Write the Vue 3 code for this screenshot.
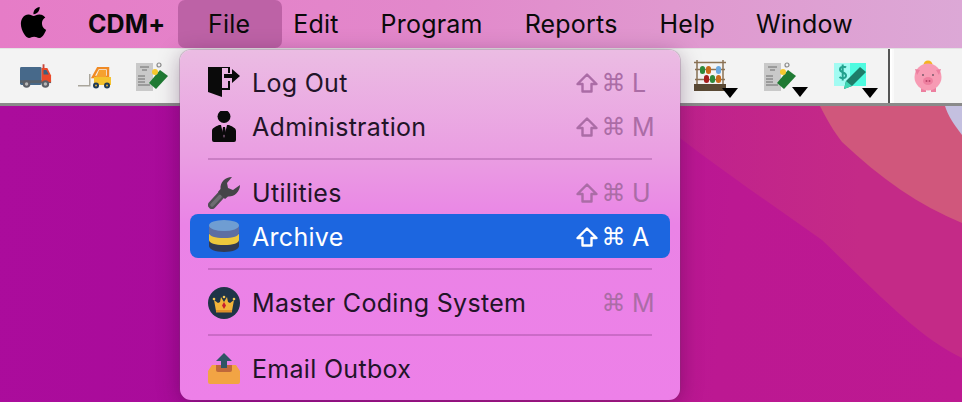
<script setup>
</script>

<template>
  <div class="screen">
    <header class="menubar">
      <svg class="apple" viewBox="0 0 24 24" width="31" height="31"><path fill="#000" d="M12.152 6.896c-.948 0-2.415-1.078-3.96-1.04-2.04.027-3.91 1.183-4.961 3.014-2.117 3.675-.546 9.103 1.519 12.09 1.013 1.454 2.208 3.09 3.792 3.039 1.52-.065 2.09-.987 3.935-.987 1.831 0 2.35.987 3.96.948 1.637-.026 2.676-1.48 3.676-2.948 1.156-1.688 1.636-3.325 1.662-3.415-.039-.013-3.182-1.221-3.22-4.857-.026-3.04 2.48-4.494 2.597-4.559-1.429-2.09-3.623-2.324-4.39-2.376-2-.156-3.675 1.09-4.61 1.09zM15.53 3.83c.843-1.012 1.4-2.427 1.245-3.83-1.207.052-2.662.805-3.532 1.818-.78.896-1.454 2.338-1.273 3.714 1.338.104 2.715-.688 3.559-1.701"/></svg>
      <span class="brand">CDM+</span>
      <span class="mi file">File</span>
      <span class="mi edit">Edit</span>
      <span class="mi program">Program</span>
      <span class="mi reports">Reports</span>
      <span class="mi help">Help</span>
      <span class="mi window">Window</span>
    </header>

    <div class="toolbar">
      <svg class="t truck" width="32" height="25" viewBox="0 0 34 26">
        <rect x="0" y="3" width="23" height="19" rx="1.5" fill="#47698a"/>
        <rect x="0" y="17" width="33" height="3" fill="#56616b"/>
        <path d="M23 4h6l4 8v7H23z" fill="#ea4a2a"/>
        <path d="M25 6h3l2.600 5H25z" fill="#3d5f7c"/>
        <rect x="24" y="0" width="2" height="4" fill="#c9463a"/>
        <circle cx="7" cy="21" r="4" fill="#5c5f66"/><circle cx="7" cy="21" r="1.800" fill="#b8b8b8"/>
        <circle cx="27" cy="21" r="4" fill="#5c5f66"/><circle cx="27" cy="21" r="1.800" fill="#b8b8b8"/>
      </svg>
      <svg class="t fork" width="34" height="22" viewBox="0 0 34 22">
        <path d="M0 18h11v-11h1.500v12.500H0z" fill="#a9a59b"/>
        <path d="M15 10l5-9h10v9z" fill="none" stroke="#f08a24" stroke-width="2.500"/>
        <path d="M16 10h17v8H16z" fill="#f4c22f"/>
        <path d="M21 3h7v7h-10z" fill="#f6a12f"/>
        <circle cx="18" cy="18.500" r="3" fill="#1f3a56"/><circle cx="18" cy="18.500" r="1" fill="#e4b43a"/>
        <circle cx="29" cy="18.500" r="3" fill="#1f3a56"/><circle cx="29" cy="18.500" r="1" fill="#e4b43a"/>
      </svg>
      <svg class="t inv1" width="34" height="30" viewBox="0 0 34 30">
        <rect x="1" y="2" width="17" height="28" fill="#c9c9c9"/>
        <path d="M5 6h9M7 9h5M3 15h7M3 18h7M3 21h7M3 24h12" stroke="#6d6d6d" stroke-width="1"/>
        <path d="M14 22l11-13 8 6-12 13z" fill="#1f7a33"/>
        <circle cx="20" cy="11" r="3" fill="#f5c82e"/>
        <circle cx="24" cy="4" r="2" fill="none" stroke="#8a8a8a" stroke-width="1.200"/>
      </svg>

      <span class="tool abacus">
        <svg width="32" height="32" viewBox="0 0 32 32">
          <path d="M0 2.500h32M1 9.500h30M1 19.500h30" stroke="#8b7355" stroke-width="1.500"/>
          <path d="M3 0v26M29 0v26" stroke="#8b7355" stroke-width="1.500"/>
          <rect x="0" y="24" width="32" height="7" fill="#5a4a35"/>
          <rect x="6" y="6" width="5" height="8" rx="2.500" fill="#2f8a3a"/>
          <rect x="12" y="6" width="5" height="8" rx="2.500" fill="#c96a1a"/>
          <rect x="22" y="6" width="5" height="8" rx="2.500" fill="#6aa8e0"/>
          <rect x="10" y="15" width="5" height="8" rx="2.500" fill="#a71d1d"/>
          <rect x="16" y="15" width="5" height="8" rx="2.500" fill="#2f8a3a"/>
          <rect x="22" y="15" width="5" height="8" rx="2.500" fill="#c96a1a"/>
        </svg>
        <i class="caret"></i>
      </span>
      <span class="tool inv2">
        <svg width="34" height="30" viewBox="0 0 34 30">
          <rect x="1" y="2" width="17" height="28" fill="#c9c9c9"/>
          <path d="M5 6h9M7 9h5M3 15h7M3 18h7M3 21h7M3 24h12" stroke="#6d6d6d" stroke-width="1"/>
          <path d="M14 22l11-13 8 6-12 13z" fill="#1f7a33"/>
          <circle cx="20" cy="11" r="3" fill="#f5c82e"/>
          <circle cx="24" cy="4" r="2" fill="none" stroke="#8a8a8a" stroke-width="1.200"/>
        </svg>
        <i class="caret"></i>
      </span>
      <span class="tool dollar">
        <svg width="33" height="26" viewBox="0 0 33 26">
          <rect x="0" y="0" width="16" height="23" fill="#a2fbf2"/>
          <rect x="16" y="0" width="16" height="23" fill="#4ffbe0"/>
          <path d="M12 4.500c-1-1-6-1.500-6 2 0 3.500 6 2.500 6 6 0 3.500-5 3-6.500 1.500M8.700 1.500v16" fill="none" stroke="#22a28e" stroke-width="2"/>
          <path d="M10 26l2-8L26 4l6 5-14 14z" fill="#1d7d69"/>
          <path d="M10 26l2-8 6 5z" fill="#3fd8b4"/>
        </svg>
        <i class="caret"></i>
      </span>
      <span class="divider"></span>
      <svg class="t piggy" width="30" height="34" viewBox="0 0 30 34">
        <circle cx="15" cy="6" r="4.500" fill="#f5b21f"/>
        <rect x="8" y="28" width="5" height="5" fill="#ec7f9f"/><rect x="18" y="28" width="5" height="5" fill="#ec7f9f"/>
        <circle cx="15" cy="18" r="13.500" fill="#f79bb4"/>
        <path d="M2 10l5 1-3 5zM28 10l-5 1 3 5z" fill="#ec7f9f"/>
        <ellipse cx="15" cy="22" rx="5" ry="4" fill="#ee7f9f"/>
        <circle cx="13.500" cy="22" r="1" fill="#b9466b"/><circle cx="16.500" cy="22" r="1" fill="#b9466b"/>
        <circle cx="10" cy="16" r="1" fill="#7a5a6a"/><circle cx="20" cy="16" r="1" fill="#7a5a6a"/>
      </svg>
    </div>

    <main class="desktop">
      <svg class="wall" width="962" height="296" viewBox="0 0 962 296">
        <defs>
          <linearGradient id="fadeLeft" x1="660" y1="0" x2="860" y2="0" gradientUnits="userSpaceOnUse">
            <stop offset="0" stop-color="#c42a87" stop-opacity="0.45"/>
            <stop offset="1" stop-color="#c42a87"/>
          </linearGradient>
        </defs>
        <path d="M640 0H962V252C920 232 880 190 822 134 760 90 700 50 640 0Z" fill="url(#fadeLeft)"/>
        <path d="M820 0H962V117C920 100 880 72 842 36 834 26 826 12 820 0Z" fill="#d0577c"/>
        <path d="M945 0H962V29C955 20 948 10 945 0Z" fill="#c4c0e0"/>
      </svg>
    </main>

    <nav class="menu">
      <div class="row">
        <svg class="ic" width="32" height="32" viewBox="0 1 32 32">
          <path d="M0 0H14V31L0 26Z" fill="#0a0a0a"/>
          <path d="M14 0H22V7H20V2H14ZM14 24H22V15H20V22H14Z" fill="#0a0a0a"/>
          <path d="M16 8H24V3L32 10 24 17V12H16Z" fill="#0a0a0a"/>
        </svg>
        <span class="lb">Log Out</span>
        <span class="sc">
          <svg class="shift" width="22" height="20" viewBox="0 0 22 20"><path d="M11 1.500L20.500 11H15.500V18.500H6.500V11H1.500Z" fill="none" stroke="currentColor" stroke-width="2.400" stroke-linejoin="round"/></svg>
          <b class="sym cmd">⌘</b><b class="key">L</b>
        </span>
      </div>
      <div class="row">
        <svg class="ic" width="32" height="32" viewBox="0 1 32 32">
          <circle cx="16" cy="6.500" r="6.500" fill="#0a0a0a"/>
          <path d="M6 32a2 2 0 0 1-2-2V21c0-3 3-4 7-6h10c4 2 7 3 7 6v9a2 2 0 0 1-2 2Z" fill="#0a0a0a"/>
          <path d="M13 15h6l-3 13z" fill="#f0a4e4"/><path d="M15 17h2l1 6-2 3-2-3z" fill="#0a0a0a"/>
        </svg>
        <span class="lb">Administration</span>
        <span class="sc">
          <svg class="shift" width="22" height="20" viewBox="0 0 22 20"><path d="M11 1.500L20.500 11H15.500V18.500H6.500V11H1.500Z" fill="none" stroke="currentColor" stroke-width="2.400" stroke-linejoin="round"/></svg>
          <b class="sym cmd">⌘</b><b class="key">M</b>
        </span>
      </div>
      <div class="sep"></div>
      <div class="row short">
        <svg class="ic" width="32" height="32" viewBox="0 0 32 32">
          <path d="M4 28L15 16" stroke="#504f54" stroke-width="8" stroke-linecap="round"/>
          <path d="M4 28L12 19.500" stroke="#6e6d72" stroke-width="3.500" stroke-linecap="round"/>
          <path d="M24 0C17 0 12 5 12.500 12L10 15l7 7 3-2.500C26 20 32 15 32 8l-7 5-5-2-1-5z" fill="#454448"/>
        </svg>
        <span class="lb">Utilities</span>
        <span class="sc">
          <svg class="shift" width="22" height="20" viewBox="0 0 22 20"><path d="M11 1.500L20.500 11H15.500V18.500H6.500V11H1.500Z" fill="none" stroke="currentColor" stroke-width="2.400" stroke-linejoin="round"/></svg>
          <b class="sym cmd">⌘</b><b class="key">U</b>
        </span>
      </div>
      <div class="row active">
        <svg class="ic" width="32" height="32" viewBox="0 0 32 32">
          <path d="M1 5V26C1 29 7 32 16 32S31 29 31 26V5Z" fill="#323a52"/>
          <path d="M1 14V20C1 23 7 25 16 25S31 23 31 20V14Z" fill="#edc73c"/>
          <path d="M1 5V13C1 16 7 18 16 18S31 16 31 13V5Z" fill="#5d6ea3"/>
          <ellipse cx="16" cy="5.500" rx="15" ry="5.500" fill="#6f9dd2"/>
        </svg>
        <span class="lb">Archive</span>
        <span class="sc">
          <svg class="shift" width="22" height="20" viewBox="0 0 22 20"><path d="M11 1.500L20.500 11H15.500V18.500H6.500V11H1.500Z" fill="none" stroke="currentColor" stroke-width="2.400" stroke-linejoin="round"/></svg>
          <b class="sym cmd">⌘</b><b class="key">A</b>
        </span>
      </div>
      <div class="sep after-active"></div>
      <div class="row">
        <svg class="ic" width="32" height="32" viewBox="0 0 32 32">
          <circle cx="16" cy="16" r="16" fill="#1f3447"/>
          <path d="M6 13l4 3 2-1 1-5 3 5 3-5 1 5 2 1 4-3-2 11H8z" fill="#f2b43a"/>
          <rect x="8" y="23" width="16" height="2.500" fill="#dd8f2a"/>
          <path d="M16 15l2 3.500-2 3.500-2-3.500z" fill="#c81e2e"/>
          <circle cx="6" cy="12" r="1.300" fill="#f5c95a"/><circle cx="26" cy="12" r="1.300" fill="#f5c95a"/><circle cx="16" cy="10" r="1.300" fill="#f5c95a"/>
        </svg>
        <span class="lb">Master Coding System</span>
        <span class="sc"><b class="sym cmd">⌘</b><b class="key">M</b></span>
      </div>
      <div class="sep"></div>
      <div class="row">
        <svg class="ic" width="32" height="32" viewBox="0 0 32 32">
          <path d="M4 12H28L32 18V29a2 2 0 0 1-2 2H2a2 2 0 0 1-2-2V18z" fill="#f2a444"/>
          <path d="M8 12h16v5a2 2 0 0 1-2 2H10a2 2 0 0 1-2-2z" fill="#c0683a"/>
          <path d="M16 0L24 8H19V15H13V8H8z" fill="#2f5565"/>
        </svg>
        <span class="lb">Email Outbox</span>
      </div>
    </nav>
  </div>
</template>

<style>
html, body { margin: 0; padding: 0; }
</style>

<style scoped>
.screen {
  position: relative;
  width: 962px;
  height: 402px;
  overflow: hidden;
  display: flex;
  flex-direction: column;
  font-family: Inter, "Liberation Sans", sans-serif;
}
.menubar {
  height: 48px;
  flex: none;
  display: flex;
  align-items: center;
  background: linear-gradient(90deg, #e67cc7 0%, #e288cb 45%, #e098cf 70%, #dca8d6 100%);
  color: #0a0a0a;
  font-size: 25px;
  letter-spacing: .2px;
}
.apple { margin-left: 18px; margin-top: -3px; flex: none; }
.brand { margin-left: 39px; font-weight: 700; font-size: 25px; letter-spacing: .1px; }
.mi { flex: none; }
.file {
  position: absolute;
  left: 178px;
  top: 0;
  width: 104px;
  box-sizing: border-box;
  padding-left: 30px;
  height: 48px;
  line-height: 48px;
  background: #bd62a6;
  border-radius: 7px;
}
.edit { margin-left: 128px; }
.program { margin-left: 42px; }
.reports { margin-left: 42px; }
.help { margin-left: 42px; }
.window { margin-left: 41px; }

.toolbar {
  height: 54px;
  flex: none;
  display: flex;
  align-items: center;
  background: #f3f3f3;
  border-top: 1px solid #e4e4e4;
  border-bottom: 3px solid #8a8a8a;
  padding-left: 20px;
}
.t { flex: none; }
.fork { margin-left: 26px; margin-top: 4px; }
.inv1 { margin-left: 23px; margin-top: 0; }
.tool { flex: none; display: block; position: relative; line-height: 0; }
.caret {
  position: absolute;
  right: -12px;
  bottom: -6px;
  width: 0;
  height: 0;
  border-left: 8px solid transparent;
  border-right: 8px solid transparent;
  border-top: 10px solid #000;
}
.abacus { margin-left: 525px; }
.inv2 { margin-left: 37px; }
.inv2 .caret { right: -11px; }
.dollar { margin-left: 37px; }
.dollar .caret { right: -11px; bottom: -9px; }
.divider {
  flex: none;
  width: 2px;
  height: 54px;
  margin-left: 21px;
  background: #555;
  box-shadow: 2px 0 0 #fff, 4px 0 0 #fafafa;
}
.piggy { margin-left: 23px; }

.desktop {
  flex: 1;
  position: relative;
  background: linear-gradient(95deg, #ab0c9c 0%, #a90b9a 25%, #bc1892 75%, #bd1991 100%);
}
.wall { position: absolute; left: 0; top: 0; }

.menu {
  position: absolute;
  left: 180px;
  top: 50px;
  width: 500px;
  height: 350px;
  box-sizing: border-box;
  padding: 11px 10px 0;
  border-radius: 11px;
  background: linear-gradient(180deg, #ebbce3 0%, #ea9ee2 30%, #ea83e6 50%, #ed80e8 100%);
  box-shadow: 0 0 0 1px rgba(120, 60, 110, .25), 0 4px 22px rgba(50, 0, 50, .35);
  color: #221428;
  font-size: 25px;
  letter-spacing: .3px;
}
.row {
  height: 44px;
  display: flex;
  align-items: center;
  padding: 0 16px 0 18px;
  border-radius: 8px;
}
.short { height: 43px; }
.short .lb, .short .sc { padding-top: 1px; }
.active .lb, .active .sc { padding-top: 2px; }
.active { background: #1c66e0; color: #fff; }
.ic { flex: none; width: 32px; height: 32px; }
.lb { margin-left: 13px; margin-right: 0; flex: 1; text-indent: -1px; }
.sc {
  display: grid;
  grid-template-columns: 26px 27px 1fr;
  align-items: center;
  color: #ab6ca6;
  width: 80px;
  flex: none;
}
.sc b { font-weight: 400; }
.active .sc { color: #fff; }
.sym { font-family: "DejaVu Sans", sans-serif; font-size: 24px; text-align: center; letter-spacing: 0; }
.shift { grid-column: 1; justify-self: center; }
.cmd { grid-column: 2; }
.key { grid-column: 3; margin-left: 5px; }
.sep {
  height: 2px;
  margin: 9px 18px 11px;
  background: rgba(120, 50, 120, .28);
}
.after-active { margin-top: 10px; }
</style>
